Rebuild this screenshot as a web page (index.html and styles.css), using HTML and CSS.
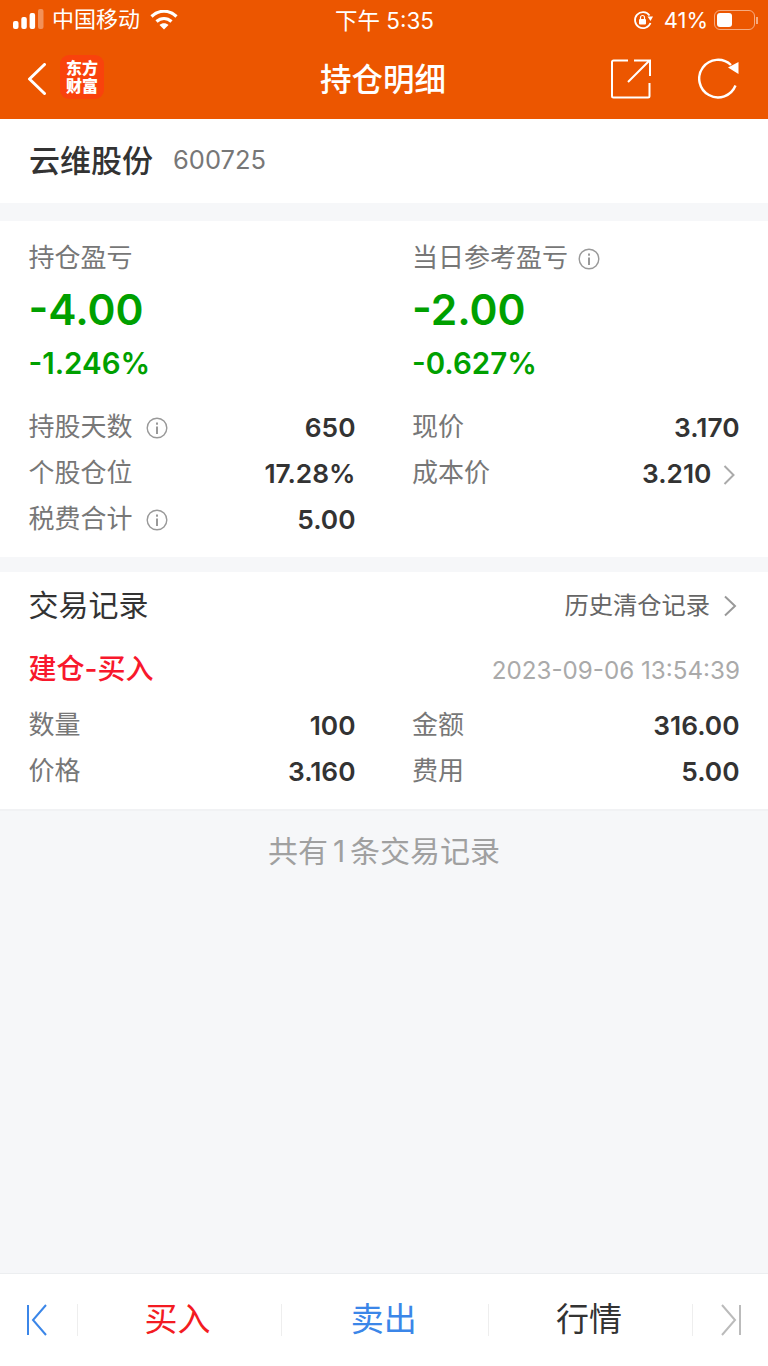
FILE: index.html
```html
<!DOCTYPE html>
<html lang="zh-CN">

<head>
    <meta charset="UTF-8">
    <meta name="viewport" content="width=device-width, initial-scale=1.0">
    <title>持仓明细</title>

    <link rel="stylesheet" href="styles.css">

</head>

<body>
    <div id="super_cont">
        <!-- orange top area -->
        <div class="top">
            <div class="status">
                <div class="status_side">
                    <svg width="32" height="22" viewBox="0 0 32 22" class="signal">
                        <rect x="0" y="12" width="5.500" height="8" rx="2" fill="#fff"/>
                        <rect x="8.300" y="8" width="5.500" height="12" rx="2" fill="#fff"/>
                        <rect x="16.600" y="4" width="5.500" height="16" rx="2" fill="#fff"/>
                        <rect x="25" y="0" width="5.500" height="20" rx="2" fill="#fff" fill-opacity="0.35"/>
                    </svg>
                    <span class="carrier">中国移动</span>
                    <svg width="28" height="20" viewBox="0 0 28 20" class="wifi">
                        <path d="M1.500 6.500C9 -0.500 19 -0.500 26.500 6.500" fill="none" stroke="#fff" stroke-width="3.200"/>
                        <path d="M6.500 11.500C11 7.500 17 7.500 21.500 11.500" fill="none" stroke="#fff" stroke-width="3.200"/>
                        <path d="M14 19.500L9.500 15C12 12.500 16 12.500 18.500 15Z" fill="#fff"/>
                    </svg>
                </div>
                <span class="clock">下午 5:35</span>
                <div class="status_side">
                    <svg width="20" height="20" viewBox="0 0 20 20">
                        <path d="M16.500 5.500A8 8 0 1 0 17.500 13" fill="none" stroke="#fff" stroke-width="1.800"/>
                        <path d="M14.500 6.500L20 6.500L17.500 11Z" fill="#fff"/>
                        <rect x="6" y="9" width="7" height="5.500" rx="1" fill="#fff"/>
                        <path d="M7.500 9V7.500A2 2 0 0 1 11.500 7.500V9" fill="none" stroke="#fff" stroke-width="1.200"/>
                    </svg>
                    <span class="battery_txt">41%</span>
                    <div class="battery"><div class="battery_fill"></div></div>
                    <div class="battery_tip"></div>
                </div>
            </div>
            <div class="nav">
                <div class="nav_left">
                    <svg width="20" height="32" viewBox="0 0 20 32">
                        <path d="M17.500 1.500L2.500 16L17.500 30.500" fill="none" stroke="#fff" stroke-width="3" stroke-linecap="round" stroke-linejoin="round"/>
                    </svg>
                    <div class="logo"><span>东方</span><span>财富</span></div>
                </div>
                <div class="nav_title">持仓明细</div>
                <div class="nav_right">
                    <svg width="40" height="40" viewBox="0 0 40 40">
                        <path d="M17 1.500H2.500A1.500 1.500 0 0 0 1 3V37A1.500 1.500 0 0 0 2.500 38.500H37A1.500 1.500 0 0 0 38.500 37V24" fill="none" stroke="#fff" stroke-width="2"/>
                        <path d="M17 23L38 2M23 1.500H39V17" fill="none" stroke="#fff" stroke-width="2"/>
                    </svg>
                    <svg width="41" height="41" viewBox="0 0 41 41">
                        <path d="M33 7A18.800 18.800 0 1 0 37.500 27.500" fill="none" stroke="#fff" stroke-width="2.400"/>
                        <path d="M30 9.500L40.500 4V16Z" fill="#fff"/>
                    </svg>
                </div>
            </div>
        </div>

        <div class="stock">
            <span class="stock_name">云维股份</span>
            <span class="stock_code">600725</span>
        </div>

        <div class="panel summary">
            <div class="cols">
                <div>
                    <div class="label">持仓盈亏</div>
                    <div class="big">-4.00</div>
                    <div class="pct">-1.246%</div>
                </div>
                <div>
                    <div class="label">当日参考盈亏
                        <svg class="info" width="22" height="22" viewBox="0 0 22 22"><use href="#info"/></svg>
                    </div>
                    <div class="big">-2.00</div>
                    <div class="pct">-0.627%</div>
                </div>
            </div>
            <div class="rows">
                <div class="row"><span class="label">持股天数 <svg class="info gap" width="22" height="22" viewBox="0 0 22 22"><use href="#info"/></svg></span><b>650</b></div>
                <div class="row"><span class="label">现价</span><b>3.170</b></div>
                <div class="row"><span class="label">个股仓位</span><b>17.28%</b></div>
                <div class="row"><span class="label">成本价</span><b class="with_arrow">3.210
                    <svg width="12" height="20" viewBox="0 0 12 20"><path d="M1.500 1L10.500 10L1.500 19" fill="none" stroke="#aaa" stroke-width="2"/></svg></b></div>
                <div class="row"><span class="label">税费合计 <svg class="info gap" width="22" height="22" viewBox="0 0 22 22"><use href="#info"/></svg></span><b>5.00</b></div>
            </div>
        </div>

        <div class="panel trades">
            <div class="trades_head">
                <span class="trades_title">交易记录</span>
                <span class="history">历史清仓记录
                    <svg width="14" height="22" viewBox="0 0 14 22"><path d="M2 1.500L12 11L2 20.500" fill="none" stroke="#999" stroke-width="2"/></svg>
                </span>
            </div>
            <div class="trade_head">
                <span class="trade_type">建仓-买入</span>
                <span class="trade_time">2023-09-06 13:54:39</span>
            </div>
            <div class="rows">
                <div class="row"><span class="label">数量</span><b>100</b></div>
                <div class="row"><span class="label">金额</span><b>316.00</b></div>
                <div class="row"><span class="label">价格</span><b>3.160</b></div>
                <div class="row"><span class="label">费用</span><b>5.00</b></div>
            </div>
        </div>

        <div class="count">共有<span class="count_num">1</span>条交易记录</div>

        <div class="bottom">
            <div class="edge">
                <svg width="22" height="32" viewBox="0 0 22 32">
                    <path d="M2 1V31M20 1L7 16L20 31" fill="none" stroke="#3b86e8" stroke-width="2"/>
                </svg>
            </div>
            <div class="tab buy">买入</div>
            <div class="tab sell">卖出</div>
            <div class="tab quote">行情</div>
            <div class="edge last">
                <svg width="22" height="32" viewBox="0 0 22 32">
                    <path d="M20 1V31M2 1L15 16L2 31" fill="none" stroke="#bbb" stroke-width="2"/>
                </svg>
            </div>
        </div>
    </div>

    <!-- info icon used in several rows -->
    <svg width="0" height="0" class="defs">
        <symbol id="info" viewBox="0 0 22 22">
            <circle cx="11" cy="11" r="9.800" fill="none" stroke="#999" stroke-width="1.400"/>
            <rect x="10" y="9.500" width="2" height="7.500" fill="#999"/>
            <rect x="10" y="5.500" width="2" height="2.200" fill="#999"/>
        </symbol>
    </svg>
</body>

</html>
```

FILE: styles.css
```css
* {
    box-sizing: border-box;
    font-family: Inter, 'Noto Sans CJK SC', sans-serif;
}

body {
    margin: 0;
    background-color: #f6f7f9;
}

#super_cont {
    width: 768px;
    height: 1366px;
    display: flex;
    flex-direction: column;
    overflow: hidden;
}

.defs {
    position: absolute;
}

.top {
    height: 119px;
    background-color: #ec5600;
    color: white;
    flex-shrink: 0;
}

.status {
    height: 38px;
    padding: 0 10px 0 13px;
    display: grid;
    grid-template-columns: 1fr auto 1fr;
    align-items: center;
    font-size: 22px;
}

.status_side {
    display: flex;
    align-items: center;
}

.status_side:last-child {
    justify-content: flex-end;
}

.signal {
    margin-right: 7px;
}

.carrier {
    line-height: 38px;
    padding-bottom: 2px;
}

.wifi {
    margin-left: 10px;
}

.clock {
    font-size: 22.500px;
    padding-bottom: 2px;
    margin-left: -2px;
}

.battery_txt {
    margin-left: 11px;
    margin-right: 6px;
}

.battery {
    width: 41px;
    height: 20px;
    border: 1.500px solid rgba(255, 255, 255, 0.5);
    border-radius: 6px;
    padding: 2px;
}

.battery_fill {
    width: 15px;
    height: 100%;
    background-color: white;
    border-radius: 3px;
}

.battery_tip {
    width: 2px;
    height: 7px;
    margin-left: 1px;
    background-color: rgba(255, 255, 255, 0.5);
}

.nav {
    height: 81px;
    padding: 0 29px 0 27px;
    display: grid;
    grid-template-columns: 1fr auto 1fr;
    align-items: center;
}

.nav_left {
    display: flex;
    align-items: center;
    gap: 13px;
}

.logo {
    width: 44px;
    height: 44px;
    margin-bottom: 3px;
    background-color: #f9420c;
    border-radius: 9px;
    display: flex;
    flex-direction: column;
    align-items: center;
    justify-content: center;
    font-size: 16px;
    line-height: 18px;
    font-weight: 900;
    font-family: 'Noto Sans CJK SC', sans-serif;
}

.nav_title {
    font-size: 31.500px;
    font-weight: 500;
    padding-bottom: 4px;
    font-family: 'Noto Sans CJK SC', sans-serif;
}

.nav_right {
    display: flex;
    justify-content: flex-end;
    align-items: center;
    gap: 47px;
}

.stock {
    height: 84px;
    background-color: white;
    padding: 0 29px 6px 29px;
    display: flex;
    align-items: center;
    gap: 20px;
    flex-shrink: 0;
}

.stock_name {
    font-size: 31px;
    font-weight: 500;
    color: #333;
}

.stock_code {
    font-size: 25.500px;
    padding-top: 3px;
    color: #777;
}

.panel {
    background-color: white;
    padding: 0 28px 0 28.500px;
    flex-shrink: 0;
}

.summary {
    height: 336px;
    margin-top: 18px;
    padding-top: 19px;
}

.cols,
.rows {
    display: grid;
    grid-template-columns: 327.500px 328px;
    column-gap: 56px;
}

.label {
    font-size: 26px;
    line-height: 36px;
    color: #777;
}

.info {
    vertical-align: -3px;
    margin-left: 3px;
}

.info.gap {
    margin-left: 6px;
}

.big {
    font-size: 42.500px;
    line-height: 54px;
    margin-top: 7px;
    font-weight: 600;
    color: #00a000;
}

.pct {
    font-size: 29.500px;
    line-height: 40px;
    margin-top: 6px;
    font-weight: 600;
    color: #00a000;
}

.summary .rows {
    margin-top: 21px;
}

.row {
    height: 46px;
    display: flex;
    justify-content: space-between;
    align-items: center;
}

.row .label {
    line-height: 34px;
}

.row b {
    font-size: 26.300px;
    font-weight: 600;
    color: #333;
    padding-right: 0.500px;
}

.with_arrow svg {
    margin-left: 5px;
    margin-right: 4.500px;
    vertical-align: -2px;
}

.trades {
    height: 239px;
    margin-top: 15px;
    border-bottom: 2px solid #f1f2f4;
}

.trades_head {
    height: 68px;
    padding-bottom: 6px;
    display: flex;
    justify-content: space-between;
    align-items: center;
}

.trades_title {
    font-size: 30px;
    color: #333;
}

.history {
    font-size: 24.300px;
    color: #666;
}

.history svg {
    margin-left: 6px;
    margin-right: 3px;
    vertical-align: -3px;
}

.trade_head {
    height: 62px;
    display: flex;
    justify-content: space-between;
    align-items: center;
}

.trade_type {
    font-size: 28px;
    font-weight: 500;
    color: #f8182c;
    padding-bottom: 8px;
}

.trade_time {
    font-size: 24.200px;
    color: #aaa;
    padding-bottom: 2px;
}

.count {
    flex: 1;
    padding-top: 16px;
    text-align: center;
    font-size: 30px;
    color: #a0a0a0;
}

.count_num {
    margin: 0 5px;
}

.bottom {
    height: 93px;
    flex-shrink: 0;
    background-color: white;
    border-top: 1px solid #eceef0;
    display: grid;
    grid-template-columns: 77px 204px 206.500px 204px 76.500px;
    align-items: center;
}

.edge {
    display: flex;
    padding-left: 26px;
}

.edge.last {
    padding-left: 27px;
    border-left: 1px solid #eee;
    height: 32px;
    align-items: center;
}

.tab {
    height: 32px;
    line-height: 26px;
    text-align: center;
    font-size: 33px;
    border-left: 1px solid #eee;
    font-family: 'Noto Sans CJK SC', sans-serif;
    padding-right: 4px;
}

.sell,
.quote {
    padding-right: 2px;
}

.buy {
    color: #f31b22;
}

.sell {
    color: #3b86e8;
}

.quote {
    color: #333;
}
```
